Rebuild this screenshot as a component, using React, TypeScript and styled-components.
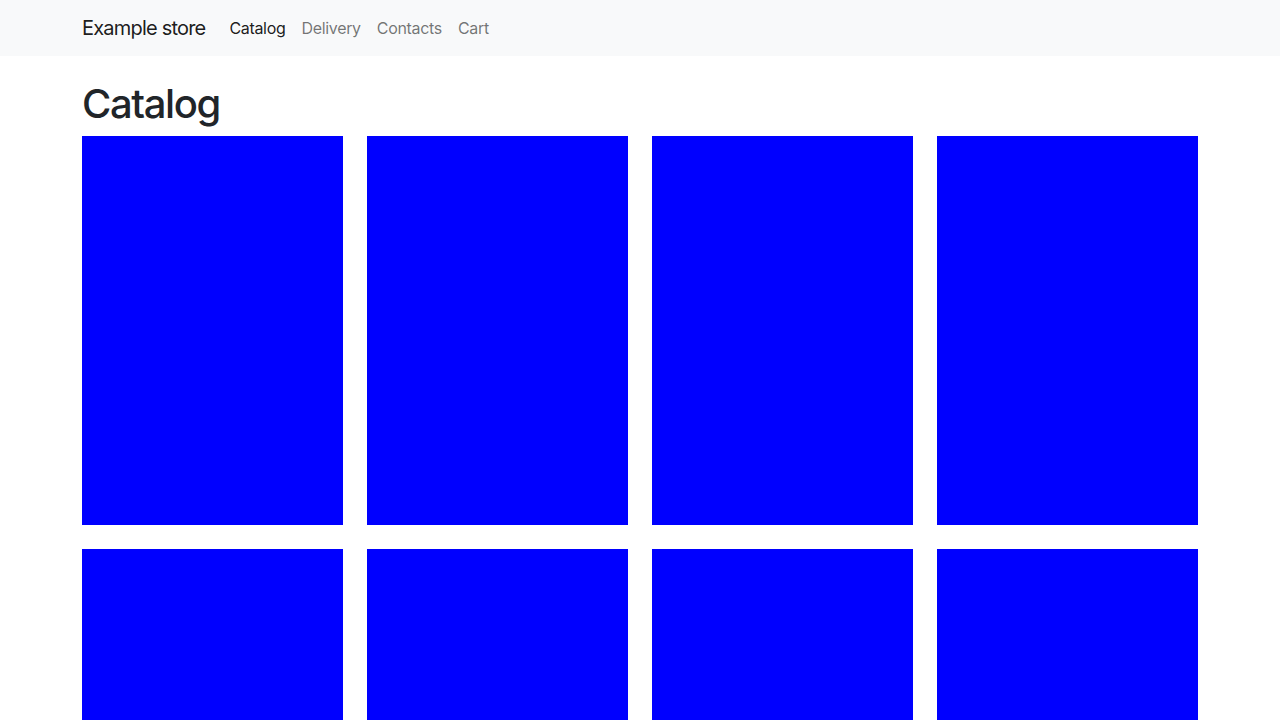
import React from "react";
import styled, { createGlobalStyle } from "styled-components";

const Global = createGlobalStyle`
  *, *::before, *::after { box-sizing: border-box; }
  body {
    margin: 0;
    font-family: Inter, "Noto Sans", "Liberation Sans", sans-serif;
    font-size: 16px;
    line-height: 1.5;
    color: #212529;
    background: #fff;
  }
`;

const Navbar = styled.nav`
  background: #f8f9fa;
  padding: 8px 0;
`;

const Container = styled.div`
  width: 1140px;
  margin: 0 auto;
  padding: 0 12px;
`;

const NavInner = styled(Container)`
  display: flex;
  align-items: center;
`;

const Brand = styled.a`
  font-size: 20px;
  line-height: 30px;
  letter-spacing: -0.04em;
  padding: 5px 0;
  margin-right: 16px;
  color: rgba(0, 0, 0, 0.9);
  text-decoration: none;
`;

const NavList = styled.div`
  display: flex;
`;

const NavLink = styled.a<{ $active?: boolean }>`
  padding: 8px;
  font-size: 16px;
  line-height: 24px;
  letter-spacing: -0.02em;
  text-decoration: none;
  color: ${(p) => (p.$active ? "rgba(0,0,0,0.9)" : "rgba(0,0,0,0.55)")};
`;

const Title = styled.h1`
  font-size: 40px;
  font-weight: 500;
  line-height: 1.2;
  letter-spacing: -0.035em;
  margin: 24px 0 8px;
  color: #212529;
`;

const Grid = styled.div`
  display: grid;
  grid-template-columns: repeat(4, 261px);
  column-gap: 24px;
  row-gap: 24px;
`;

const Card = styled.div`
  height: 389px;
  background: #0000ff;
`;

const links = ["Catalog", "Delivery", "Contacts", "Cart"];

export default function App() {
  return (
    <>
      <Global />
      <Navbar>
        <NavInner>
          <Brand href="#">Example store</Brand>
          <NavList>
            {links.map((l, i) => (
              <NavLink key={l} href="#" $active={i === 0}>
                {l}
              </NavLink>
            ))}
          </NavList>
        </NavInner>
      </Navbar>
      <Container>
        <Title>Catalog</Title>
        <Grid>
          {Array.from({ length: 8 }).map((_, i) => (
            <Card key={i} />
          ))}
        </Grid>
      </Container>
    </>
  );
}
